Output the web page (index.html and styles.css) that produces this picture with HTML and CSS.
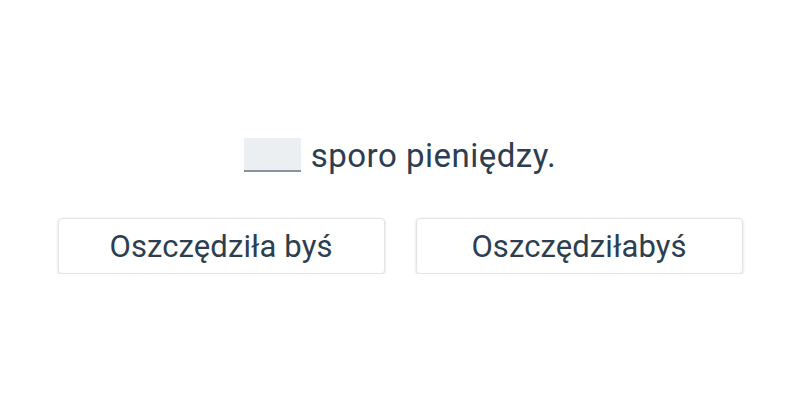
FILE: index.html
```html
<!DOCTYPE html>
<html>
<head>
  <meta name="viewport" content="width=device-width">
  <link rel="stylesheet" href="styles.css">
</head>
<body>
  <div class="exercise">
    <p class="sentence"><span class="blank"></span> sporo pieniędzy.</p>
    <div class="options">
      <button class="option">Oszczędziła byś</button>
      <button class="option">Oszczędziłabyś</button>
    </div>
  </div>
</body>
</html>
```

FILE: styles.css
```css
body {
  margin: 0;
  font-family: Roboto, "Liberation Sans", sans-serif;
  color: #2c3e50;
  background: #fff;
}

.exercise {
  padding-top: 137px;
  display: flex;
  flex-direction: column;
  align-items: center;
}

.sentence {
  margin: 0;
  font-size: 33px;
  letter-spacing: 0.5px;
  display: flex;
  align-items: center;
  gap: 10px;
  height: 36px;
}

.blank {
  display: inline-block;
  width: 57px;
  height: 32px;
  background-color: #eceff1;
  border-bottom: 2px solid #8a939b;
}

.options {
  display: flex;
  gap: 31px;
  margin-top: 45px;
}

.option {
  width: 327px;
  height: 56px;
  background: #fff;
  border: 1px solid #e2e5e8;
  border-radius: 4px;
  box-shadow: 0 1px 3px rgba(0, 0, 0, 0.15);
  font-family: Roboto, "Liberation Sans", sans-serif;
  font-size: 31px;
  letter-spacing: 0.1px;
  color: #2c3e50;
  padding: 0;
}
```
